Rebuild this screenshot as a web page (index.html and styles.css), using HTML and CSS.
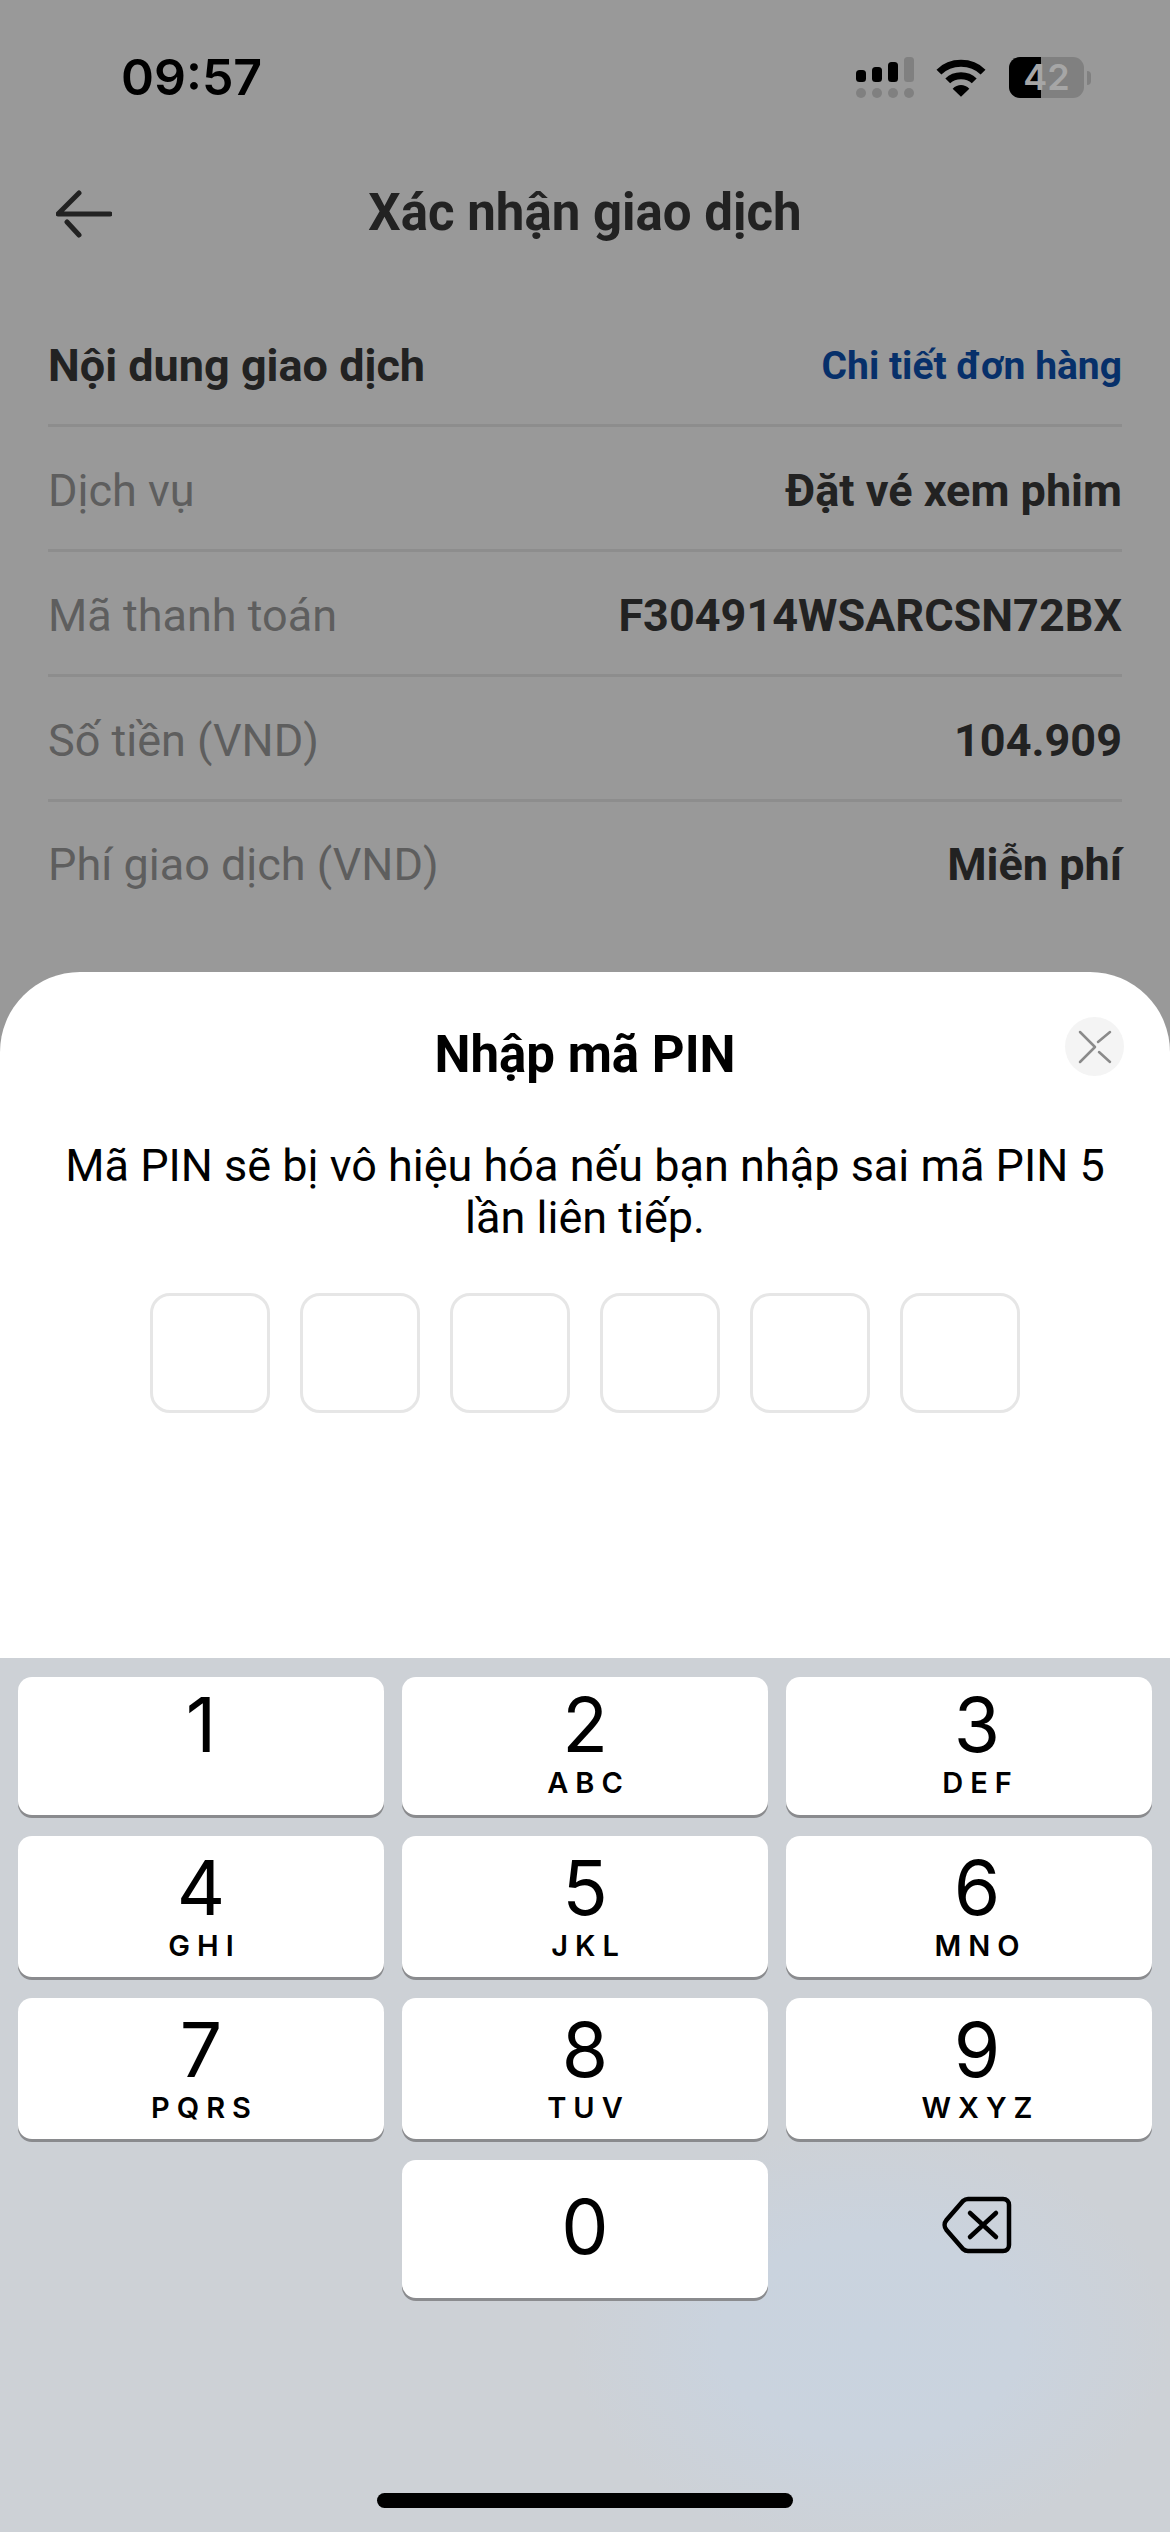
FILE: index.html
```html
<!DOCTYPE html>
<html lang="vi">
<head>
<meta charset="utf-8">
<title>Nhập mã PIN</title>
<link rel="stylesheet" href="styles.css">
</head>
<body>
<div class="screen">
  <section class="backdrop">
    <div class="status">
      <span class="time">09:57</span>
      <div class="status-icons">
        <svg class="signal" width="58" height="46" viewBox="0 0 58 46"><rect x="0" y="13" width="10" height="12" rx="3.5" fill="#000"/><rect x="16" y="10" width="10" height="15" rx="3.5" fill="#000"/><rect x="32" y="5" width="10" height="20" rx="3.5" fill="#000"/><rect x="48" y="0" width="10" height="25" rx="3.5" fill="#808080"/><circle cx="5" cy="36" r="5" fill="#808080"/><circle cx="21" cy="36" r="5" fill="#808080"/><circle cx="37" cy="36" r="5" fill="#808080"/><circle cx="53" cy="36" r="5" fill="#808080"/></svg>
        <svg class="wifi" width="50" height="38" viewBox="0 0 51 38"><path d="M3 13C15 1 36 1 48 13" fill="none" stroke="#000" stroke-width="7"/><path d="M12 22C19 15 32 15 39 22" fill="none" stroke="#000" stroke-width="7"/><path d="M17 30C22 25 29 25 34 30L25.500 38Z" fill="#000"/></svg>
        <div class="battery"><div class="battery-body"><div class="battery-fill"></div><span class="battery-num">42</span></div><div class="battery-tip"></div></div>
      </div>
    </div>
    <header class="nav">
      <svg class="back" width="56" height="48" viewBox="0 0 56 48"><path d="M23 3L2 24H54M11 32L23 45" fill="none" stroke="#222" stroke-width="5" stroke-linecap="round" stroke-linejoin="round"/></svg>
      <h1 class="nav-title">Xác nhận giao dịch</h1>
    </header>
    <div class="details">
      <div class="row"><span class="row-head">Nội dung giao dịch</span><span class="row-link">Chi tiết đơn hàng</span></div>
      <div class="row"><span class="row-label">Dịch vụ</span><span class="row-value">Đặt vé xem phim</span></div>
      <div class="row"><span class="row-label">Mã thanh toán</span><span class="row-value">F304914WSARCSN72BX</span></div>
      <div class="row"><span class="row-label">Số tiền (VND)</span><span class="row-value">104.909</span></div>
      <div class="row row-last"><span class="row-label">Phí giao dịch (VND)</span><span class="row-value">Miễn phí</span></div>
    </div>
  </section>

  <section class="sheet">
    <div class="sheet-head">
      <h2 class="sheet-title">Nhập mã PIN</h2>
      <button class="close" aria-label="Đóng"><svg width="36" height="36" viewBox="0 0 36 36"><path d="M3 3L18 18L3 33M33 3L21 13M22 23L33 33" fill="none" stroke="#8a8a8a" stroke-width="2.500" stroke-linecap="round" stroke-linejoin="round"/></svg></button>
    </div>
    <p class="sheet-text">Mã PIN sẽ bị vô hiệu hóa nếu bạn nhập sai mã PIN 5 lần liên tiếp.</p>
    <div class="pin">
      <div class="pin-box"></div><div class="pin-box"></div><div class="pin-box"></div><div class="pin-box"></div><div class="pin-box"></div><div class="pin-box"></div>
    </div>
  </section>

  <section class="keyboard">
    <div class="keys">
      <div class="key"><span class="digit">1</span></div>
      <div class="key"><span class="digit">2</span><span class="letters">ABC</span></div>
      <div class="key key-right"><span class="digit">3</span><span class="letters">DEF</span></div>
      <div class="key key-tall"><span class="digit">4</span><span class="letters">GHI</span></div>
      <div class="key key-tall"><span class="digit">5</span><span class="letters">JKL</span></div>
      <div class="key key-tall key-right"><span class="digit">6</span><span class="letters">MNO</span></div>
      <div class="key key-tall"><span class="digit">7</span><span class="letters">PQRS</span></div>
      <div class="key key-tall"><span class="digit">8</span><span class="letters">TUV</span></div>
      <div class="key key-tall key-right"><span class="digit">9</span><span class="letters">WXYZ</span></div>
      <div class="key-empty"></div>
      <div class="key key-zero"><span class="digit">0</span></div>
      <div class="key-empty key-del">
        <svg width="70" height="58" viewBox="0 0 70 58"><path d="M26 3H61C64.500 3 67 5.500 67 9V49C67 52.500 64.500 55 61 55H26C24 55 22.500 54.300 21 53L4.500 34C2 31 2 27 4.500 24L21 5C22.500 3.700 24 3 26 3Z" fill="none" stroke="#000" stroke-width="4.500" stroke-linejoin="round"/><path d="M28 17L54 41M54 17L28 41" stroke="#000" stroke-width="4.500" stroke-linecap="round"/></svg>
      </div>
    </div>
    <div class="home-bar"></div>
  </section>
</div>
</body>
</html>
```
FILE: styles.css
```css
* { box-sizing: border-box; }
html, body { margin: 0; padding: 0; }
body { width: 1170px; height: 2532px; overflow: hidden; background: #999; }
.screen { width: 1170px; height: 2532px; display: flex; flex-direction: column; font-family: Roboto, "Noto Sans", sans-serif; background: #999; }

.backdrop { height: 972px; flex: none; background: #999; }
.status { height: 150px; padding: 0 79px 0 121px; display: flex; align-items: flex-start; justify-content: space-between; }
.time { font-family: Inter, sans-serif; font-weight: 600; font-size: 50px; line-height: 50px; margin-top: 52px; color: #000; }
.status-icons { display: flex; align-items: flex-start; margin-top: 57px; }
.signal { margin-right: 22px; }
.wifi { margin-right: 23px; margin-top: 2px; }
.battery { display: flex; align-items: center; height: 41px; }
.battery-body { position: relative; width: 75px; height: 41px; border-radius: 11px; background: #808080; }
.battery-fill { width: 32px; height: 41px; background: #000; border-radius: 11px 0 0 11px; }
.battery-num { position: absolute; inset: 0; text-align: center; font-family: Inter, sans-serif; font-weight: 600; font-size: 36px; line-height: 41px; color: #a6a6a6; }
.battery-tip { width: 4px; height: 14px; margin-left: 3px; border-radius: 0 5px 5px 0; background: #808080; }

.nav { position: relative; height: 124px; padding-top: 2px; display: flex; align-items: center; justify-content: center; }
.back { position: absolute; left: 56px; top: 40px; }
.nav-title { margin: 0; font-size: 51px; font-weight: 700; color: #222; line-height: 122px; }

.details { padding: 28px 48px 0; }
.row { height: 125px; padding-top: 5px; display: flex; align-items: center; justify-content: space-between; border-bottom: 3px solid #8d8d8d; font-size: 45px; }
.row-last { border-bottom: 0; padding-top: 0; }
.row-head { font-weight: 700; color: #222; }
.row-link { font-weight: 700; color: #07306a; font-size: 39px; }
.row-label { color: #5e5e5e; }
.row-value { font-weight: 700; color: #222; }

.sheet { height: 686px; flex: none; background: #fff; border-radius: 80px 80px 0 0; }
.sheet-head { position: relative; height: 168px; padding-top: 50px; text-align: center; }
.sheet-title { margin: 0; font-size: 51px; line-height: 66px; font-weight: 700; color: #000; }
.close { position: absolute; right: 46px; top: 45px; width: 59px; height: 59px; padding: 0; border: 0; border-radius: 50%; background: #f4f4f4; display: flex; align-items: center; justify-content: center; }
.sheet-text { margin: 0; padding: 0 60px; text-align: center; font-size: 45px; line-height: 52px; color: #000; }
.pin { display: flex; justify-content: center; gap: 30px; margin-top: 49px; }
.pin-box { width: 120px; height: 120px; border: 3px solid #e6e6e6; border-radius: 20px; background: #fff; }

.keyboard { flex: 1; padding: 19px 18px 0; background: radial-gradient(ellipse 300px 210px at 870px 682px, #c9d3df 0%, #cad3de 50%, rgba(205,209,214,0) 100%), #cdd1d6; display: flex; flex-direction: column; }
.keys { display: grid; grid-template-columns: repeat(3, 366px); grid-template-rows: 138px 141px 141px 138px; column-gap: 18px; row-gap: 21px; }
.key { display: flex; flex-direction: column; align-items: center; background: #fff; border-radius: 14px; box-shadow: 0 3px 0 #8a8b8e; color: #000; font-family: Inter, sans-serif; }
.key-right { padding-left: 16px; }
.digit { font-size: 75px; line-height: 75px; margin-top: 10px; font-weight: 400; }
.key-tall .digit { margin-top: 14px; }
.letters { font-size: 29px; line-height: 32px; font-weight: 600; letter-spacing: 7px; margin-right: -7px; margin-top: 5px; }
.key-empty { display: flex; align-items: center; justify-content: center; }
.key-del { padding: 0 0 8px 16px; }
.key-zero .digit { margin-top: 29px; }
.home-bar { width: 416px; height: 15px; border-radius: 8px; background: #000; margin: 195px auto 0; }
```
